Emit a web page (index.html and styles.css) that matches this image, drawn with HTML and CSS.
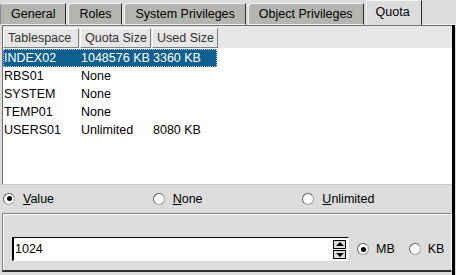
FILE: index.html
```html
<!DOCTYPE html>
<html lang="en">
<head>
    <meta charset="utf-8">
    <title>Quota</title>
    <link rel="stylesheet" href="styles.css">
</head>
<body>
    <div id="win">
        <div class="tabs">
            <div class="tab">General</div>
            <div class="tab">Roles</div>
            <div class="tab">System Privileges</div>
            <div class="tab">Object Privileges</div>
            <div class="tab active">Quota</div>
            <div class="tab-fill"></div>
        </div>

        <div class="page">
            <div class="list">
                <div class="head">
                    <div class="hcell c1">Tablespace</div>
                    <div class="hcell c2">Quota Size</div>
                    <div class="hcell c3">Used Size</div>
                </div>
                <div class="rows">
                    <div class="row sel"><span class="c1">INDEX02</span><span class="c2">1048576 KB</span><span class="c3">3360 KB</span></div>
                    <div class="row"><span class="c1">RBS01</span><span class="c2">None</span><span class="c3"></span></div>
                    <div class="row"><span class="c1">SYSTEM</span><span class="c2">None</span><span class="c3"></span></div>
                    <div class="row"><span class="c1">TEMP01</span><span class="c2">None</span><span class="c3"></span></div>
                    <div class="row"><span class="c1">USERS01</span><span class="c2">Unlimited</span><span class="c3">8080 KB</span></div>
                </div>
            </div>

            <div class="choices">
                <label class="opt"><i class="radio on"></i><span><u>V</u>alue</span></label>
                <label class="opt"><i class="radio"></i><span><u>N</u>one</span></label>
                <label class="opt"><i class="radio"></i><span><u>U</u>nlimited</span></label>
            </div>

            <div class="amount">
                <div class="entry">
                    <div class="field">1024</div>
                    <div class="spin">
                        <div class="arrow up"></div>
                        <div class="arrow down"></div>
                    </div>
                </div>
                <label class="opt unit"><i class="radio on"></i><span>MB</span></label>
                <label class="opt unit"><i class="radio"></i><span>KB</span></label>
            </div>
        </div>
    </div>
</body>
</html>
```

FILE: styles.css
```css
body {
    margin: 0;
    background: #dcdcdc;
    font-family: "Liberation Sans", Arial, sans-serif;
    font-size: 12.5px;
    color: #000;
}
#win {
    width: 456px;
    height: 275px;
    overflow: hidden;
}
.tabs {
    display: flex;
    align-items: flex-end;
    height: 25px;
    background: #dcdcdc;
}
.tab {
    height: 22px;
    line-height: 21px;
    padding: 0 10px 0 10px;
    margin-right: 2px;
    background: #b4b5b0;
    border-top: 1px solid #f2f2f2;
    border-left: 1px solid #f2f2f2;
    border-right: 1px solid #303030;
    border-bottom: 1px solid #f2f2f2;
    border-top-left-radius: 4px;
    box-sizing: border-box;
    color: #000;
}
.tab:first-child {
    border-left: 1px solid #8a8a8a;
}
.tab.active {
    height: 25px;
    line-height: 22px;
    background: #dcdcdc;
    border-top-left-radius: 0;
    border-bottom: 0;
    padding: 0 11px 0 9px;
    margin-right: 0;
}
.tab-fill {
    flex: 1;
    height: 1px;
    background: #f2f2f2;
}
.page {
    border-right: 3px solid #000;
    margin-right: 1px;
    height: 250px;
    box-sizing: border-box;
}
.list {
    margin: 0 0 0 2px;
    border-top: 1px solid #707070;
    border-left: 1px solid #707070;
    height: 159px;
    box-sizing: border-box;
    background: #fff;
    display: flex;
    flex-direction: column;
}
.head {
    display: flex;
    height: 22px;
    padding-top: 2px;
    box-sizing: border-box;
    background: #e6e6e6;
    flex-shrink: 0;
}
.hcell {
    height: 20px;
    line-height: 18px;
    padding-left: 4px;
    margin-right: 1px;
    box-sizing: border-box;
    border-top: 1px solid #fff;
    border-left: 1px solid #fff;
    border-right: 1px solid #808080;
    border-bottom: 1px solid #808080;
    color: #333;
}
.hcell.c1 { width: 76px; }
.hcell.c2 { width: 71px; }
.hcell.c3 { width: 66px; }
.rows {
    padding-top: 1px;
}
.row {
    display: flex;
    height: 18px;
    line-height: 18px;
    white-space: nowrap;
}
.row span {
    min-width: 0;
    flex-shrink: 0;
}
.row .c1 { width: 78px; padding-left: 1px; box-sizing: border-box; }
.row .c2 { width: 71px; }
.row .c3 { width: 65px; padding-left: 1px; box-sizing: border-box; }
.row.sel {
    background: #0f5f8f;
    color: #fff;
    width: 214px;
    outline: 1px dotted #b8c8d8;
    outline-offset: -1px;
}
.choices {
    display: flex;
    height: 27px;
    align-items: center;
    border-top: 1px solid #c8c8c8;
    padding-left: 3px;
}
.choices .opt {
    width: 153px;
}
.opt {
    display: flex;
    align-items: center;
}
.radio {
    width: 12px;
    height: 12px;
    border-radius: 50%;
    background: #fff;
    border: 1px solid #a0a0a0;
    border-top-color: #606060;
    border-left-color: #606060;
    box-sizing: border-box;
    margin-right: 8px;
    display: flex;
    align-items: center;
    justify-content: center;
}
.radio.on::after {
    content: "";
    width: 5px;
    height: 5px;
    border-radius: 50%;
    background: #000;
}
.amount {
    margin: 1px 0 0 2px;
    height: 59px;
    border: 1px solid #808080;
    border-right-color: #fff;
    border-bottom: 2px solid #303030;
    box-shadow: inset 1px 1px 0 #fff;
    box-sizing: border-box;
    display: flex;
    align-items: flex-end;
    padding: 0 0 9px 9px;
}
.entry {
    display: flex;
    align-items: center;
    flex-shrink: 0;
    width: 337px;
    height: 24px;
    border: 1px solid #000;
    border-right-color: #fff;
    border-bottom-color: #fff;
    border-left-width: 2px;
    box-sizing: border-box;
    background: #fff;
    margin-right: 8px;
}
.field {
    flex: 1;
    padding-left: 1px;
}
.spin {
    display: flex;
    flex-direction: column;
    gap: 1px;
    margin-right: 2px;
}
.arrow {
    width: 13px;
    height: 9px;
    background: #dcdcdc;
    border: 1px solid #000;
    box-sizing: border-box;
    position: relative;
}
.arrow::after {
    content: "";
    position: absolute;
    left: 2px;
    border-left: 4px solid transparent;
    border-right: 4px solid transparent;
}
.arrow.up::after {
    top: 1px;
    border-bottom: 4px solid #000;
}
.arrow.down::after {
    top: 2px;
    border-top: 4px solid #000;
}
.unit {
    height: 24px;
    flex-shrink: 0;
    margin-right: 14px;
}
.unit .radio {
    margin-right: 7px;
}
```
